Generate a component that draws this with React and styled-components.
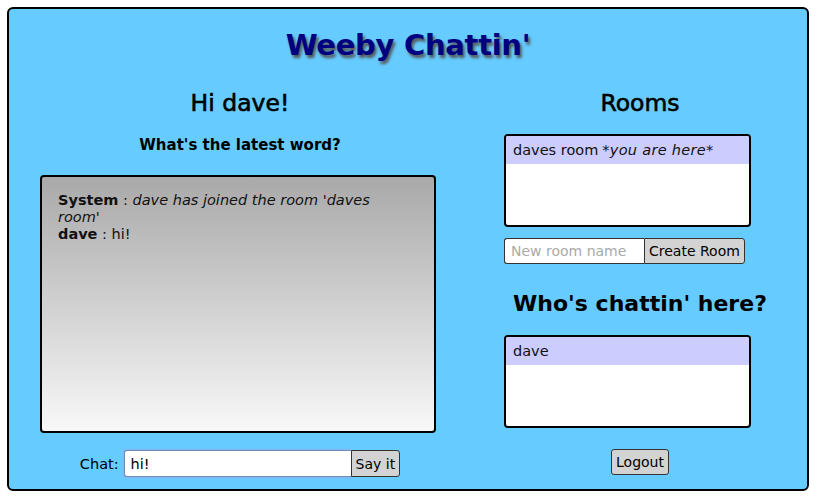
import React from 'react'
import styled, { createGlobalStyle } from 'styled-components'

const GlobalStyle = createGlobalStyle`
	body {
		margin: 7px;
		background: #fff;
		font-family: 'DejaVu Sans', Verdana, sans-serif;
		color: #000;
	}
`

const Frame = styled.main`
	width: 802px;
	height: 484px;
	box-sizing: border-box;
	background-color: #66ccff;
	border: 2px solid #000;
	border-radius: 6px;
	padding: 0 31px;
	display: flex;
	flex-direction: column;
	align-items: stretch;
`

const Title = styled.h1`
	margin: 19px 0 0;
	height: 36px;
	text-align: center;
	font-size: 29px;
	font-weight: bold;
	color: #000080;
	text-shadow: 2px 3px 3px #555;
	letter-spacing: -0.3px;
`

const Columns = styled.div`
	display: flex;
	gap: 64px;
	margin-top: 25px;
`

const Column = styled.section`
	width: ${(props) => props.width}px;
	display: flex;
	flex-direction: column;
	align-items: ${(props) => (props.left ? 'flex-start' : 'stretch')};
`

const Heading = styled.h2`
	margin: ${(props) => props.margin || '0'};
	align-self: stretch;
	text-align: center;
	font-size: ${(props) => (props.strong ? 22 : 23.5)}px;
	font-weight: ${(props) => (props.strong ? 'bold' : 'normal')};
	-webkit-text-stroke: ${(props) => (props.strong ? '0' : '0.6px #000')};
	line-height: 28px;
`

const SubHeading = styled.h3`
	margin: 19px 0 0;
	align-self: stretch;
	text-align: center;
	font-size: 15px;
	font-weight: bold;
	line-height: 18px;
`

const ChatLog = styled.div`
	margin-top: 21px;
	width: 396px;
	height: 258px;
	box-sizing: border-box;
	border: 2px solid #000;
	border-radius: 4px;
	background: linear-gradient(#a9a9a9, #f8f8f8);
	padding: 15px 34px 16px 16px;
	font-size: 14.5px;
	line-height: 17px;
	color: #111;
`

const Message = styled.div``

const Author = styled.b``

const SystemText = styled.i``

const ChatRow = styled.form`
	margin-top: 17px;
	align-self: stretch;
	display: flex;
	justify-content: center;
	align-items: center;
	font-size: 14.5px;
`

const Label = styled.label`
	margin-right: 5px;
`

const TextInput = styled.input`
	width: ${(props) => props.width}px;
	height: ${(props) => props.height}px;
	box-sizing: border-box;
	border: 1px solid ${(props) => (props.focused ? '#6a8fbf' : '#333')};
	border-right: none;
	border-radius: 3px 0 0 3px;
	background: #fff;
	padding: 2px 6px;
	font-family: inherit;
	font-size: ${(props) => props.size || 14}px;
	box-shadow: ${(props) => (props.focused ? '0 0 2px 1px #8ab0e8' : 'none')};
	outline: none;
	&::placeholder {
		color: #aaa;
	}
`

const Button = styled.button`
	height: ${(props) => props.height}px;
	box-sizing: border-box;
	border: 1px solid #333;
	border-radius: ${(props) => (props.joined ? '0 3px 3px 0' : '3px')};
	background: #d3d3d3;
	padding: 0 4px;
	font-family: inherit;
	font-size: 14px;
	color: #000;
`

const ListBox = styled.ul`
	margin: ${(props) => props.margin};
	padding: 0;
	list-style: none;
	width: 247px;
	height: 93px;
	box-sizing: border-box;
	border: 2px solid #000;
	border-radius: 4px;
	background: #fff;
	overflow: hidden;
`

const ListItem = styled.li`
	height: 28px;
	padding: 0 7px;
	background: ${(props) => (props.active ? '#ccccff' : 'transparent')};
	font-size: 14.5px;
	line-height: 28px;
	color: #111;
`

const Here = styled.i`
	margin-left: 4px;
	letter-spacing: 0.3px;
`

const CreateRow = styled.form`
	margin-top: 11px;
	display: flex;
`

const Footer = styled.div`
	margin-top: 21px;
	display: flex;
	justify-content: center;
`

const App = () => {
	return (
		<>
			<GlobalStyle />
			<Frame>
				<Title>Weeby Chattin'</Title>
				<Columns>
					<Column width={400} left>
						<Heading>Hi dave!</Heading>
						<SubHeading>What's the latest word?</SubHeading>
						<ChatLog>
							<Message>
								<Author>System</Author> :{' '}
								<SystemText>dave has joined the room 'daves room'</SystemText>
							</Message>
							<Message>
								<Author>dave</Author> : hi!
							</Message>
						</ChatLog>
						<ChatRow>
							<Label>Chat:</Label>
							<TextInput width={227} height={27} size={14.5} focused defaultValue='hi!' />
							<Button height={27} joined>
								Say it
							</Button>
						</ChatRow>
					</Column>
					<Column width={272}>
						<Heading>Rooms</Heading>
						<ListBox margin='17px 0 0'>
							<ListItem active>
								daves room<Here>*you are here*</Here>
							</ListItem>
						</ListBox>
						<CreateRow>
							<TextInput width={140} height={26} placeholder='New room name' />
							<Button height={26} joined>
								Create Room
							</Button>
						</CreateRow>
						<Heading strong margin='26px 0 0'>
							Who's chattin' here?
						</Heading>
						<ListBox margin='17px 0 0'>
							<ListItem active>dave</ListItem>
						</ListBox>
						<Footer>
							<Button height={26}>Logout</Button>
						</Footer>
					</Column>
				</Columns>
			</Frame>
		</>
	)
}

export default App
